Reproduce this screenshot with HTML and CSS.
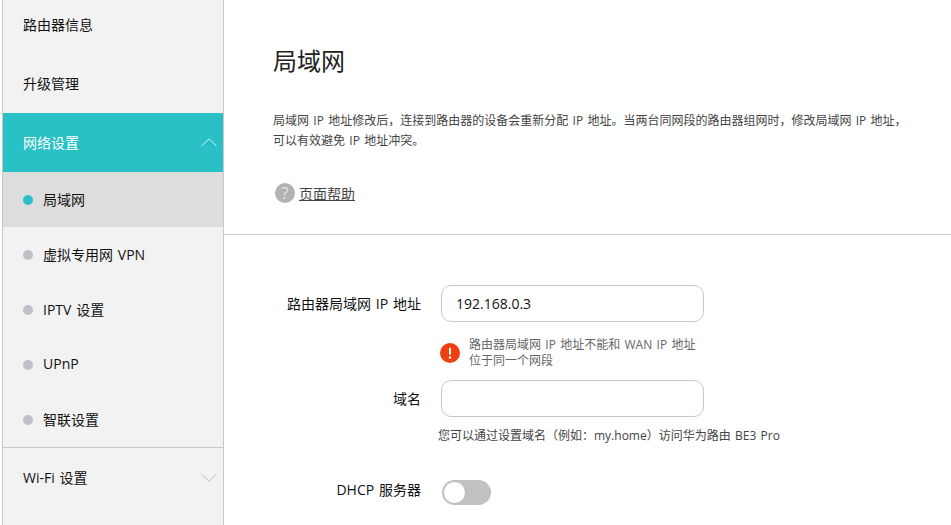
FILE: index.html
```html
<!DOCTYPE html>
<html lang="zh-CN">
<head>
<meta charset="utf-8">
<title>局域网</title>
<link rel="stylesheet" href="styles.css">
</head>
<body>
<div class="page">
  <nav class="sidebar">
    <div class="nav-item">路由器信息</div>
    <div class="nav-item">升级管理</div>
    <div class="nav-item nav-open">
      <span>网络设置</span>
      <svg class="chev" width="16" height="9" viewBox="0 0 16 9"><path d="M0.5 8 L8 0.8 L15.5 8" fill="none" stroke="#d6f2f3" stroke-width="1"/></svg>
    </div>
    <div class="sub-item sub-active"><i class="dot dot-on"></i>局域网</div>
    <div class="sub-item"><i class="dot"></i>虚拟专用网 VPN</div>
    <div class="sub-item"><i class="dot"></i>IPTV 设置</div>
    <div class="sub-item"><i class="dot"></i>UPnP</div>
    <div class="sub-item"><i class="dot"></i>智联设置</div>
    <div class="nav-item nav-sep">
      <span>Wi-Fi 设置</span>
      <svg class="chev" width="16" height="9" viewBox="0 0 16 9"><path d="M0.5 1 L8 8.2 L15.5 1" fill="none" stroke="#bcbcbc" stroke-width="1"/></svg>
    </div>
  </nav>
  <main class="content">
    <header class="head">
      <h1 class="title">局域网</h1>
      <p class="desc">局域网 IP 地址修改后，连接到路由器的设备会重新分配 IP 地址。当两台同网段的路由器组网时，修改局域网 IP 地址，<br>可以有效避免 IP 地址冲突。</p>
      <div class="help">
        <span class="help-icon">?</span>
        <a class="help-link">页面帮助</a>
      </div>
    </header>
    <section class="form">
      <div class="row">
        <label class="label">路由器局域网 IP 地址</label>
        <div class="input">192.168.0.3</div>
      </div>
      <div class="error">
        <svg class="err-icon" width="20" height="20" viewBox="0 0 20 20"><circle cx="10" cy="10" r="10" fill="#ee3f11"/><rect x="9" y="4.5" width="2" height="7.5" rx="1" fill="#fff"/><circle cx="10" cy="14.5" r="1.2" fill="#fff"/></svg>
        <div class="err-text">路由器局域网 IP 地址不能和 WAN IP 地址<br>位于同一个网段</div>
      </div>
      <div class="row">
        <label class="label">域名</label>
        <div class="input"></div>
      </div>
      <p class="note">您可以通过设置域名（例如：my.home）访问华为路由 BE3 Pro</p>
      <div class="row row-toggle">
        <label class="label">DHCP 服务器</label>
        <div class="toggle"><i class="knob"></i></div>
      </div>
    </section>
  </main>
</div>
</body>
</html>
```

FILE: styles.css
```css
* { box-sizing: border-box; }
html, body { margin: 0; padding: 0; height: 100%; overflow: hidden; background: #fff; }
body { font-family: "Open Sans", "Noto Sans CJK SC", sans-serif; font-size: 14px; color: #111; word-spacing: 1.2px; }
.page { display: flex; height: 525px; overflow: hidden; }

.sidebar { flex: none; width: 222px; margin-left: 2px; background: #f2f2f2; border-left: 1px solid #c8c8c8; border-right: 1px solid #c8c8c8; display: flex; flex-direction: column; height: 530px; margin-top: -5px; }
.nav-item { flex: none; height: 59px; padding: 0 6px 2px 20px; display: flex; align-items: center; justify-content: space-between; }
.nav-open { background: #29c0c6; color: #fff; }
.nav-sep { border-top: 1px solid #c8c8c8; height: 60px; }
.sub-item { flex: none; height: 55px; padding: 0 0 2px 20px; display: flex; align-items: center; gap: 10px; }
.sub-active { background: #ddd; }
.dot { width: 10px; height: 10px; border-radius: 50%; background: #bfc1c8; flex: none; position: relative; top: 1px; }
.dot-on { background: #29c0c6; }
.chev { position: relative; top: 1px; }

.content { flex: 1; min-width: 0; display: flex; flex-direction: column; }
.head { height: 235px; border-bottom: 1px solid #ccc; padding: 43px 20px 0 49px; }
.title { margin: 0; font-size: 24px; font-weight: 400; line-height: 36px; color: #222; }
.desc { margin: 32px 0 0; font-size: 12px; line-height: 20px; color: #444; }
.help { display: flex; align-items: center; gap: 4px; margin-top: 32px; margin-left: 2px; }
.help-icon { width: 20px; height: 20px; border-radius: 50%; background: #b2b2b2; color: #e6e6e6; font-size: 16px; line-height: 20px; text-align: center; }
.help-link { color: #444; text-decoration: underline; font-size: 14px; }

.form { padding-top: 50px; }
.row { display: flex; align-items: center; gap: 20px; }
.label { width: 197px; text-align: right; color: #111; padding-bottom: 2px; }
.input { width: 263px; height: 37px; border: 1px solid #c8c8c8; border-radius: 10px; padding: 0 14px; line-height: 35px; color: #111; }
.error { display: flex; align-items: center; gap: 9px; margin: 15px 0 0 216px; }
.err-icon { flex: none; }
.err-text { font-size: 12px; line-height: 16px; color: #666; }
.error + .row { margin-top: 11px; }
.note { margin: 10px 0 0 214px; font-size: 12px; line-height: 18px; color: #444; }
.row-toggle { margin-top: 35px; align-items: flex-start; }
.row-toggle .label { line-height: 20px; padding-bottom: 0; }
.toggle { width: 49px; height: 25px; border-radius: 13px; background: #c0c2c2; padding: 2px; margin-left: 1px; }
.knob { display: block; width: 21px; height: 21px; border-radius: 50%; background: #fff; }
```
